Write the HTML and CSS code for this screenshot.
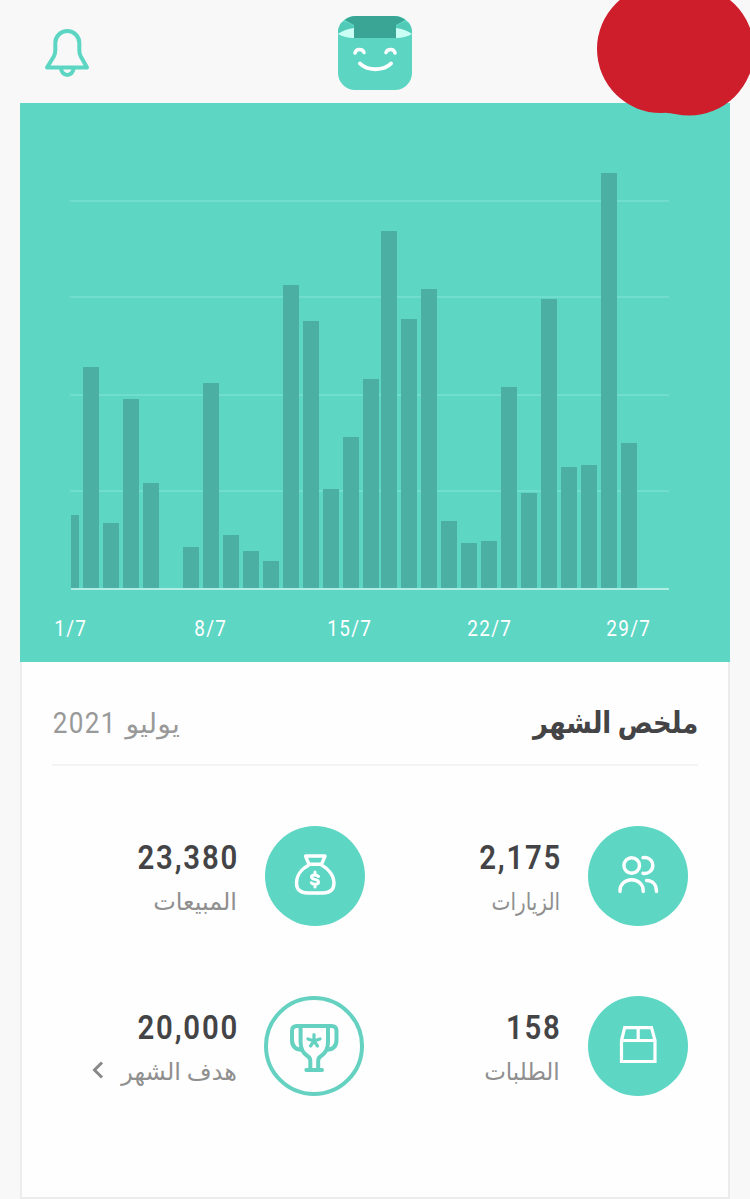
FILE: index.html
```html
<!DOCTYPE html>
<html lang="ar" dir="rtl">
<head>
<meta charset="utf-8">
<title>ملخص الشهر</title>
<link rel="stylesheet" href="styles.css">
</head>
<body>
<header class="topbar">
  <svg class="marker" viewBox="0 0 153 118"><path d="M64 49L70 113L95 115V49Z"/><circle cx="64" cy="49" r="64"/><circle cx="92" cy="50.500" r="65"/></svg>
  <svg class="logo" viewBox="0 0 74 74">
    <rect width="74" height="74" rx="17" fill="#5cd6c3"/>
    <path d="M7 4Q12 0 18 0H56Q62 0 67 4L58 9V22H16V9Z" fill="#3ba595"/>
    <path d="M4 6Q13 6 16 12L0 17Q0 10 4 6ZM70 6Q61 6 58 12L74 17Q74 10 70 6Z" fill="#52cab8"/>
    <path d="M0 18Q7 13 16 12V22Q7 22 0 18ZM74 18Q67 13 58 12V22Q67 22 74 18Z" fill="#cafff5"/>
    <path d="M17 37C18 32.500 24.500 32.500 26 36.500M48 36.500C49.500 32.500 56 32.500 57 37" fill="none" stroke="#fff" stroke-width="3.500" stroke-linecap="round"/>
    <path d="M22 47.500C29 55 46 55 53 47.500" fill="none" stroke="#fff" stroke-width="4" stroke-linecap="round"/>
  </svg>
  <svg class="bell" viewBox="0 0 46 50"><path d="M3 39.500L9.800 28.500C11.300 26 11.300 24 11.300 22V15A12 12 0 0 1 35.300 15V22C35.300 24 35.300 26 36.800 28.500L43 39.500ZM17 40A6.300 7 0 0 0 29.600 40"/></svg>
</header>
<main class="card">
  <section class="chart">
    <svg class="plot" viewBox="0 0 600 420">
      <path class="grid-line" d="M0 28H599M0 124H599M0 222H599M0 318H599"/>
      <g class="bars">
        <rect x="1" y="342" width="8" height="73"/>
        <rect x="13" y="194" width="16" height="221"/>
        <rect x="33" y="350" width="16" height="65"/>
        <rect x="53" y="226" width="16" height="189"/>
        <rect x="73" y="310" width="16" height="105"/>
        <rect x="113" y="374" width="16" height="41"/>
        <rect x="133" y="210" width="16" height="205"/>
        <rect x="153" y="362" width="16" height="53"/>
        <rect x="173" y="378" width="16" height="37"/>
        <rect x="193" y="388" width="16" height="27"/>
        <rect x="213" y="112" width="16" height="303"/>
        <rect x="233" y="148" width="16" height="267"/>
        <rect x="253" y="316" width="16" height="99"/>
        <rect x="273" y="264" width="16" height="151"/>
        <rect x="293" y="206" width="16" height="209"/>
        <rect x="311" y="58" width="16" height="357"/>
        <rect x="331" y="146" width="16" height="269"/>
        <rect x="351" y="116" width="16" height="299"/>
        <rect x="371" y="348" width="16" height="67"/>
        <rect x="391" y="370" width="16" height="45"/>
        <rect x="411" y="368" width="16" height="47"/>
        <rect x="431" y="214" width="16" height="201"/>
        <rect x="451" y="320" width="16" height="95"/>
        <rect x="471" y="126" width="16" height="289"/>
        <rect x="491" y="294" width="16" height="121"/>
        <rect x="511" y="292" width="16" height="123"/>
        <rect x="531" y="0" width="16" height="415"/>
        <rect x="551" y="270" width="16" height="145"/>
      </g>
      <path class="axis" d="M1 416H599"/>
    </svg>
    <div class="dates" dir="ltr"><span>1/7</span><span>8/7</span><span>15/7</span><span>22/7</span><span>29/7</span></div>
  </section>
  <section class="summary">
    <div class="heading"><h1>ملخص الشهر</h1><p class="month"><span class="word">يوليو</span><span class="year">2021</span></p></div>
    <div class="stats">
      <div class="stat">
        <div class="badge"><svg viewBox="0 0 100 100"><circle cx="43.700" cy="39.500" r="7.800"/><path d="M55 31.700A8 8 0 1 1 55 47.300M32 65.500V64.500A11.600 10.800 0 0 1 55.200 64.500V65.500M58.500 54.500C65 54.500 68.500 59 68.500 65.500"/></svg></div>
        <div class="info"><strong>2,175</strong><span class="label visits">الزيارات</span></div>
      </div>
      <div class="stat">
        <div class="badge"><svg viewBox="0 0 100 100"><path d="M40.500 30H60L56.500 38.300H44ZM44 39C36 43 31.500 50 31.500 57C31.500 64.500 36 67 43 67H57.500C64.500 67 69 64.500 69 57C69 50 64 43 56.500 39"/><path class="dollar" d="M53.500 50.500C52 48.500 46.500 48 46.500 51C46.500 54.200 53.500 52.500 53.500 56C53.500 59.200 47.500 58.800 46.300 56.800M50 46V49M50 58.500V61"/></svg></div>
        <div class="info"><strong>23,380</strong><span class="label">المبيعات</span></div>
      </div>
      <div class="stat">
        <div class="badge"><svg viewBox="0 0 100 100" class="box"><path d="M33.500 44.500L36.700 31.700H63.500L67 44.500V65.500H33.500ZM33.500 44.500H67M50.200 32V44.500"/></svg></div>
        <div class="info"><strong>158</strong><span class="label orders">الطلبات</span></div>
      </div>
      <div class="stat goal">
        <div class="badge outline"><svg viewBox="0 0 100 100"><path d="M36.600 30H64V46C64 54 60.500 58 56.500 60.500C54.500 61.700 54.200 63 54.200 65V74M36.600 30V46C36.600 54 40 58 44 60.500C46 61.700 46.300 63 46.300 65V74M42.300 74H58M36.600 30H33Q28 30 28 35V44C28 50 31.500 53.500 38 54M64 30H67.500Q72.500 30 72.500 35V44C72.500 50 69 53.500 62.500 54"/><path class="star" d="M50 45V38.500M50 45L44 43M50 45L56 43M50 45L46.500 50M50 45L53.500 50"/></svg></div>
        <div class="info"><strong>20,000</strong><span class="label">هدف الشهر<svg class="chevron" viewBox="0 0 12 18"><path d="M10 1.500L2.500 9L10 16.500"/></svg></span></div>
      </div>
    </div>
  </section>
</main>
</body>
</html>
```
FILE: styles.css
```css
* { box-sizing: border-box; }
body { margin: 0; height: 1199px; padding: 0 20px; overflow: hidden; background: #f8f8f8; font-family: Roboto, "DejaVu Sans", sans-serif; color: #444446; }
svg { display: block; overflow: visible; }
.topbar { position: relative; height: 103px; display: grid; grid-template-columns: 1fr 74px 1fr; direction: ltr; }
.logo { grid-column: 2; width: 74px; height: 74px; margin-top: 16px; }
.bell { grid-column: 1; grid-row: 1; width: 46px; height: 50px; margin: 28px 0 0 24px; fill: none; stroke: #5cd6c3; stroke-width: 4; stroke-linejoin: round; stroke-linecap: round; }
.marker { position: absolute; z-index: 2; left: 577px; top: 0; width: 153px; height: 118px; fill: #ce1e2c; }
.card { height: 1096px; background: #fefefe; border: 2px solid #ececec; border-top: 0; }
.chart { height: 559px; margin: 0 -2px; padding-top: 70px; background: #5dd6c4; direction: ltr; }
.plot { width: 600px; height: 420px; margin-left: 50px; }
.grid-line { stroke: #70ddce; stroke-width: 2; }
.bars { fill: #4bb0a3; }
.axis { stroke: #b0eee3; stroke-width: 2; }
.dates { display: grid; grid-template-columns: repeat(5, 139.500px); margin-left: -19px; padding-top: 24px; color: #fff; font-size: 22px; line-height: 24px; letter-spacing: 1.500px; text-align: center; }
.dates span { transform: scaleX(0.860); }
.summary { padding: 0 30px; }
.heading { height: 104px; display: flex; justify-content: space-between; align-items: center; padding-top: 18px; border-bottom: 2px solid #f4f4f4; }
h1 { margin: 0; font-size: 30px; font-weight: 700; transform: scaleX(0.864); transform-origin: right; }
.month { margin: 0; display: flex; gap: 2px; color: #999; font-size: 30px; }
.word { font-size: 27px; padding-top: 3px; transform: scaleX(1.050); transform-origin: right; }
.year { letter-spacing: 1.500px; transform: scaleX(0.870); transform-origin: left; padding-left: 1px; }
.stats { display: grid; grid-template-columns: 323px 323px; grid-auto-rows: 170px; margin-right: 10px; padding-top: 60px; }
.stat { display: flex; gap: 28px; }
.badge { width: 100px; height: 100px; border-radius: 50%; background: #5dd6c4; flex: none; }
.badge svg { width: 100px; height: 100px; fill: none; stroke: #fff; stroke-width: 3.400; stroke-linecap: round; stroke-linejoin: round; }
.badge .box { stroke-linejoin: miter; stroke-width: 3.200; stroke-linecap: butt; }
.badge .dollar { stroke-width: 3; }
.goal .badge { position: relative; right: 1px; }
.outline { background: transparent; border: 4px solid #65d1c0; }
.outline svg { margin: -4px; stroke: #65d1c0; stroke-width: 4; }
.outline .star { stroke-width: 3.200; }
.info { display: flex; flex-direction: column; align-items: flex-start; padding-top: 12px; }
strong { font-size: 33px; line-height: 40px; font-weight: 600; letter-spacing: 2px; margin-right: -2px; direction: ltr; transform: scaleX(0.890); transform-origin: right; }
.label { display: flex; align-items: center; gap: 17px; font-size: 24px; line-height: 48px; color: #8f8f8f; }
.visits { transform: scaleX(0.835); transform-origin: right; }
.orders { transform: scaleX(0.960); transform-origin: right; }
.chevron { width: 12px; height: 18px; margin-top: -4px; fill: none; stroke: #888; stroke-width: 3; }
```
